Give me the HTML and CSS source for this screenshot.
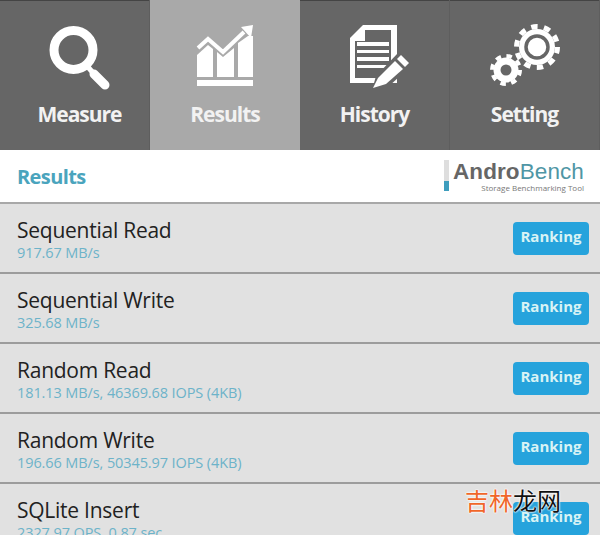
FILE: index.html
```html
<!DOCTYPE html>
<html lang="en">
<head>
    <meta charset="UTF-8">
    <meta name="viewport" content="width=device-width, initial-scale=1.0">
    <title>AndroBench Results</title>
    <link rel="stylesheet" href="styles.css">
</head>
<body>
    <div class="tabs">
        <div class="tab tab-first">
            <svg class="tab-icon" viewBox="0 0 72 72">
                <circle cx="29.5" cy="27" r="19.5" fill="none" stroke="#fff" stroke-width="9"/>
                <path d="M44 44 L50 51" stroke="#fff" stroke-width="5"/>
                <path d="M50 51 L61 62" stroke="#fff" stroke-width="9" stroke-linecap="round"/>
            </svg>
            <span class="tab-label">Measure</span>
        </div>
        <div class="tab tab-active">
            <svg class="tab-icon" viewBox="0 0 72 72">
                <path d="M8 32 L19 22 L24 26 L24 54 L8 54 Z" fill="#fff"/>
                <path d="M28 29 L34 34 L45 25 L45 54 L28 54 Z" fill="#fff"/>
                <path d="M49 20 L59 13 L64 13 L64 54 L49 54 Z" fill="#fff"/>
                <rect x="8" y="57" width="56" height="6" fill="#fff"/>
                <path d="M9 25 L19 16 L34 29 L55 9" fill="none" stroke="#fff" stroke-width="4"/>
                <path d="M52 4 L64 2 L62 15 Z" fill="#fff"/>
            </svg>
            <span class="tab-label">Results</span>
        </div>
        <div class="tab">
            <svg class="tab-icon" viewBox="0 0 72 72">
                <path d="M11 15 L24 2 L58 2 L58 60 L11 60 Z" fill="#fff"/>
                <path d="M26 7 L52 7 L52 55 L16 55 L16 18 L26 18 Z" fill="#666"/>
                <path d="M18 19 H50 V23 H18 Z M18 27 H50 V30 H18 Z M18 34 H50 V38 H18 Z M18 42 H50 V45 H18 Z" fill="#fff"/>
                <path d="M33 67 L37 53 L59 30 L72 43 L49 64 Z" fill="#666"/>
                <path d="M34 65 L39 55 L56 38 L64 46 L47 61 Z" fill="#fff"/>
                <path d="M58 36 L62 32 L70 40 L66 44 Z" fill="#fff"/>
            </svg>
            <span class="tab-label">History</span>
        </div>
        <div class="tab">
            <svg class="tab-icon" viewBox="0 0 72 72">
                <circle cx="48" cy="24" r="18" fill="#fff"/>
                <circle cx="48" cy="24" r="20.5" fill="none" stroke="#fff" stroke-width="5" stroke-dasharray="6.44 6.44"/>
                <circle cx="48" cy="24" r="11" fill="#fff" stroke="#666" stroke-width="3.5"/>
                <circle cx="17" cy="47" r="12.5" fill="#fff"/>
                <circle cx="17" cy="47" r="14" fill="none" stroke="#fff" stroke-width="4" stroke-dasharray="5.5 5.5"/>
                <circle cx="17" cy="47" r="5.5" fill="#666"/>
            </svg>
            <span class="tab-label">Setting</span>
        </div>
    </div>

    <div class="header">
        <span class="header-title">Results</span>
        <div class="logo">
            <div class="logo-bar"></div>
            <div class="logo-text">
                <div class="logo-name"><span class="logo-andro">Andro</span><span class="logo-bench">Bench</span></div>
                <div class="logo-sub">Storage Benchmarking Tool</div>
            </div>
        </div>
    </div>

    <div class="rows">
        <div class="row">
            <div>
                <div class="row-name">Sequential Read</div>
                <div class="row-value">917.67 MB/s</div>
            </div>
            <div class="rank-btn">Ranking</div>
        </div>
        <div class="row">
            <div>
                <div class="row-name">Sequential Write</div>
                <div class="row-value">325.68 MB/s</div>
            </div>
            <div class="rank-btn">Ranking</div>
        </div>
        <div class="row">
            <div>
                <div class="row-name">Random Read</div>
                <div class="row-value">181.13 MB/s, 46369.68 IOPS (4KB)</div>
            </div>
            <div class="rank-btn">Ranking</div>
        </div>
        <div class="row">
            <div>
                <div class="row-name">Random Write</div>
                <div class="row-value">196.66 MB/s, 50345.97 IOPS (4KB)</div>
            </div>
            <div class="rank-btn">Ranking</div>
        </div>
        <div class="row">
            <div>
                <div class="row-name">SQLite Insert</div>
                <div class="row-value">2327.97 QPS, 0.87 sec</div>
            </div>
            <div class="rank-btn">Ranking</div>
        </div>
    </div>

    <div class="watermark"><span class="mark-orange">吉林</span>龙网</div>
</body>
</html>
```

FILE: styles.css
```css
/* AndroBench results screen */
html, body {
    height: 100%;
}

body {
    margin: 0;
    height: 535px;
    overflow: hidden;
    position: relative;
    font-family: "Open Sans", "Liberation Sans", sans-serif;
    background-color: #e1e1e1;
}

/* Top tabs */
.tabs {
    display: flex;
    height: 150px;
    background-color: #666;
    box-shadow: inset 0 1px 0 #444;
}

.tab {
    width: 150px;
    box-sizing: border-box;
    display: flex;
    flex-direction: column;
    align-items: center;
    padding-top: 23px;
    border-right: 1px solid #5e5e5e;
}

.tab-first {
    padding-left: 10px;
}

.tab-active {
    background-color: #a9a9a9;
    border-right: none;
}

.tab-icon {
    width: 72px;
    height: 72px;
    display: block;
    overflow: visible;
}

.tab-label {
    margin-top: 5px;
    font-size: 21px;
    line-height: 28px;
    font-weight: 700;
    letter-spacing: -1px;
    color: #f2f2f2;
}

/* Results header */
.header {
    height: 52px;
    display: flex;
    justify-content: space-between;
    align-items: center;
    padding: 0 16px 0 17px;
    background-color: #fff;
    border-bottom: 2px solid #a8a8a8;
}

.header-title {
    font-size: 20px;
    font-weight: 700;
    letter-spacing: -0.6px;
    color: #4aa4bd;
}

.logo {
    display: flex;
    align-items: flex-start;
    gap: 4px;
}

.logo-bar {
    width: 5px;
    height: 31px;
    background: linear-gradient(to bottom, #dedede 0, #dedede 68%, #3e9dbd 68%);
}

.logo-name {
    font-family: "Liberation Sans", sans-serif;
    font-size: 22.5px;
    line-height: 23px;
    letter-spacing: 0.1px;
}

.logo-andro {
    color: #666;
    font-weight: bold;
}

.logo-bench {
    color: #4f96a5;
}

.logo-sub {
    font-size: 8px;
    line-height: 10px;
    text-align: right;
    color: #777;
}

/* Result rows */
.row {
    height: 70px;
    box-sizing: border-box;
    display: flex;
    justify-content: space-between;
    align-items: flex-start;
    padding: 12px 11px 0 17px;
    border-bottom: 2px solid #9c9c9c;
}

.row-name {
    font-size: 21px;
    line-height: 28px;
    letter-spacing: -0.25px;
    color: #222;
}

.row-value {
    font-size: 14.5px;
    line-height: 17px;
    letter-spacing: -0.1px;
    color: #6db3c9;
}

.rank-btn {
    width: 76px;
    height: 33px;
    margin-top: 6px;
    border-radius: 4px;
    background-color: #26a3dc;
    color: #d9f3f5;
    font-size: 15px;
    font-weight: 700;
    line-height: 29px;
    text-align: center;
}

/* Site watermark sits over the last row */
.watermark {
    position: absolute;
    left: 465px;
    top: 484px;
    font-family: "Noto Sans CJK SC", sans-serif;
    font-size: 24px;
    line-height: 32px;
    color: #111;
    text-shadow: 0 0 2px #fff, 0 0 2px #fff, 0 0 2px #fff;
}

.mark-orange {
    color: #f0662a;
}
```
